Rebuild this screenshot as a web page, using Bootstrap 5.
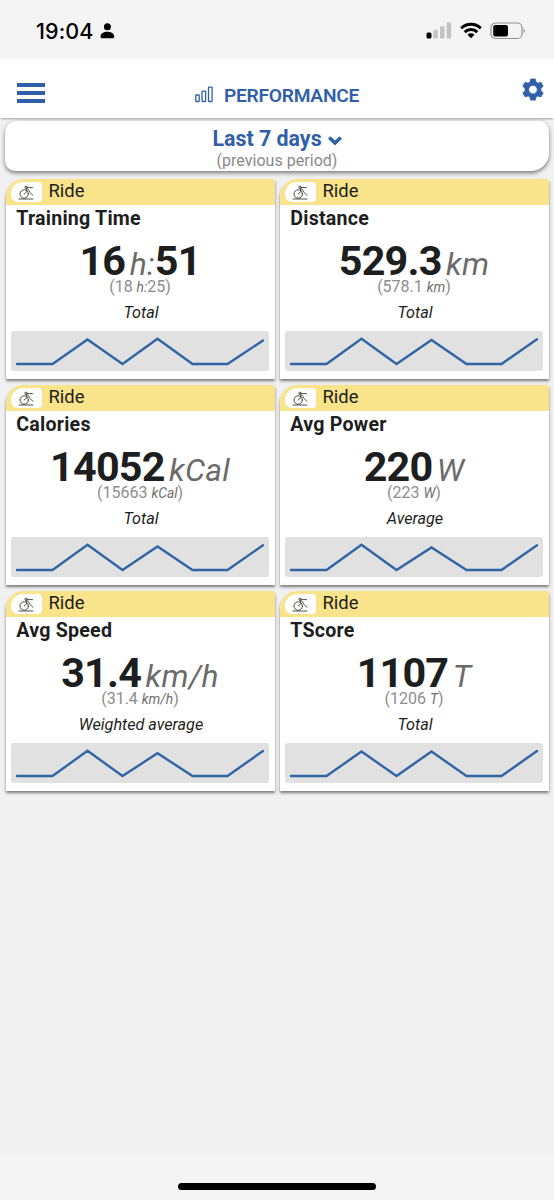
<!DOCTYPE html>
<html lang="en">
<head>
<meta charset="utf-8">
<meta name="viewport" content="width=device-width, initial-scale=1">
<title>Performance</title>
<link href="https://cdn.jsdelivr.net/npm/bootstrap@5.3.0/dist/css/bootstrap.min.css" rel="stylesheet">
<style>
  body { font-family: Roboto, "Liberation Sans", sans-serif; background: #f1f1f1; color: #1d1e20; height: 1200px; overflow: hidden; }
  svg { display: block; flex: none; }
  .blue { color: #315fa9; }
  .status { height: 59px; background: #f4f4f4; padding: 2px 32px 0 36px; color: #000; }
  .clock { font: 500 21.5px/30px Inter, sans-serif; letter-spacing: .1px; }
  .signal { margin-right: 8.5px; }
  .battery { margin: 0 -4px 0 8px; }
  .topbar { height: 59px; background: #fff; box-shadow: 0 2px 2px -1px rgba(0,0,0,.35); padding: 0 9px 0 17px; }
  .topbar h1 { font-size: 19.2px; font-weight: 600; line-height: 24px; letter-spacing: -.25px; }
  .topbar .menu { margin-top: 9px; }
  .topbar .heading { padding: 15px 12px 0 0; }
  .topbar .bars { margin: -4px 11px 0 0; }
  .topbar .gear { margin-top: 2px; }
  .period { height: 50px; margin: 3px 5px 0; border-radius: 12px 10px 18px 10px; background: #fff; box-shadow: 0 2px 4px rgba(0,0,0,.5); padding-top: 6px; }
  .period-name { font-size: 21.4px; font-weight: 700; line-height: 24px; }
  .period-name svg { margin: 2px 0 0 6px; }
  .previous { font-size: 16px; line-height: 19px; color: #8a8a8a; letter-spacing: .03px; }
  .tiles { display: grid; grid-template-columns: 269px 269px; column-gap: 5px; row-gap: 6px; margin: 8px 0 0 5.5px; }
  .tile { height: 200px; background: #fff; border-radius: 18px 3px 0 0; box-shadow: 0 2px 3px rgba(0,0,0,.5); }
  .sport { height: 26px; background: #f9e38b; border-radius: 18px 3px 0 0; padding-left: 5px; font-size: 18.4px; line-height: 23px; }
  .sport-name { margin: -3px 0 0 7px; }
  .chip { width: 31px; height: 20px; background: #fff; border-radius: 12px 4px 4px 7px; }
  .tile h2 { font-size: 19.6px; font-weight: 700; line-height: 26px; padding: 1px 0 0 10.8px; margin: 0; letter-spacing: .23px; }
  .figure-row { font-size: 41.3px; font-weight: 700; line-height: 42px; height: 42px; margin-top: 8px; white-space: nowrap; letter-spacing: -.8px; }
  .figure-row i { font-size: 31.8px; font-weight: 400; color: #6b6b6b; margin: 0 0 0 4.5px; letter-spacing: .2px; }
  .before { font-size: 16px; line-height: 18px; margin-top: -4px; color: #8d8d8d; }
  .before i { font-size: 13.8px; color: #6f6f6f; }
  .method { font-size: 16.2px; line-height: 20px; margin: 7px 0 0 2px; font-style: italic; }
  .spark { width: 258px; height: 40px; margin: 8px 0 0 5.5px; background: #e1e1e1; border-radius: 3px; }
  .spark polyline { fill: none; stroke: #3165a6; stroke-width: 2.4; stroke-linecap: round; stroke-linejoin: miter; }
  .homebar { height: 46px; background: #f4f4f4; padding-bottom: 10.5px; }
  .homebar span { width: 198px; height: 7px; border-radius: 4px; background: #000; }
</style>
</head>
<body class="d-flex flex-column">
<svg width="0" height="0" class="position-absolute">
  <symbol id="rider" viewBox="0 0 16 15">
    <g fill="none" stroke="#3a3a35" stroke-width=".9" stroke-linecap="round" stroke-linejoin="round">
      <circle cx="6.200" cy="9" r="4.200"/>
      <circle cx="8" cy="2.300" r="1.200"/>
      <path d="M1 14H15M9.600 2.600H14.500M9 3.500C10.500 4 11 5.500 11.500 7L15 10.300M8.300 3.900L9 6.500 6.200 9"/>
    </g>
  </symbol>
</svg>

<div class="status d-flex align-items-center flex-shrink-0">
  <span class="clock">19:04</span>
  <svg style="margin-left:7px" width="15" height="16" viewBox="0 0 15 16" fill="#000"><circle cx="7.400" cy="3.800" r="3.500"/><path d="M.5 13.400C.7 10.500 3.500 8.700 7.400 8.700s6.700 1.800 6.900 4.700c.1 1.200-.6 1.800-1.700 1.800H2.200C1.100 15.200 .4 14.600 .5 13.400Z"/></svg>
  <svg class="signal ms-auto" width="26" height="17" viewBox="0 0 26 17"><rect x=".5" y="10.500" width="5" height="6" rx="1.500"/><g fill="#c3c3c3"><rect x="7.300" y="7.700" width="4.500" height="8.800" rx="1.300"/><rect x="14" y="4.200" width="4.500" height="12.300" rx="1.300"/><rect x="20.700" y=".5" width="4.500" height="16" rx="1.300"/></g></svg>
  <svg width="22" height="17" viewBox="0 0 22 17"><g fill="none" stroke="#000" stroke-width="2.900"><path d="M1.200 6.200a14 14 0 0 1 19.600 0"/><path d="M4.700 10.100a9 9 0 0 1 12.600 0"/></g><path d="M7.500 12.700a5 5 0 0 1 7 0L11 16.200Z"/></svg>
  <svg class="battery" width="36" height="18" viewBox="0 0 36 18"><rect x="1" y="1" width="31" height="15.500" rx="4.500" fill="none" stroke="#909090" stroke-width="1.200"/><rect x="3.200" y="3" width="14.800" height="11.500" rx="2"/><path d="M33.700 6.500c1.500.7 1.500 3.900 0 4.600Z" fill="#777"/></svg>
</div>

<header class="topbar blue d-flex align-items-center justify-content-between flex-shrink-0 position-relative">
  <svg class="menu" width="28" height="20" viewBox="0 0 28 20" fill="#315fa9"><path d="M0 0h28v4H0zM0 8h28v4H0zM0 16h28v4H0z"/></svg>
  <div class="heading d-flex align-items-center">
    <svg class="bars" width="18" height="17" viewBox="0 0 18 17" fill="none" stroke="#315fa9" stroke-width="1.300"><rect x=".8" y="9" width="3.400" height="6.500" rx=".5"/><rect x="7" y="5.200" width="3.600" height="10.300" rx=".5"/><rect x="13.500" y="1.200" width="3.600" height="14.300" rx=".5"/></svg>
    <h1 class="m-0">PERFORMANCE</h1>
  </div>
  <svg class="gear" width="24" height="24" viewBox="0 0 24 24" fill="#315fa9"><path fill-rule="evenodd" d="M9.700 1h4.600l.7 3.100 1.900 1.100 3-1 2.300 4-2.300 2.200v2.300l2.300 2.200-2.300 4-3-1-1.900 1.100-.7 3.100H9.700L9 19l-1.900-1.100-3 1-2.300-4 2.300-2.200v-2.300L1.800 8.200l2.300-4 3 1L9 4.100ZM12 7.300a4.300 4.300 0 1 0 0 8.600 4.300 4.300 0 0 0 0-8.600Z" stroke="#315fa9" stroke-width=".8" stroke-linejoin="round"/></svg>
</header>

<section class="period text-center flex-shrink-0">
  <div class="period-name blue d-flex justify-content-center align-items-center">Last 7 days
    <svg width="14" height="9" viewBox="0 0 14 9" fill="none" stroke="#315fa9" stroke-width="3.600"><path d="M1.200 1.500L7 7 12.800 1.500"/></svg>
  </div>
  <div class="previous">(previous period)</div>
</section>

<main class="tiles">
  <article class="tile">
    <div class="sport d-flex align-items-center"><span class="chip d-flex justify-content-center align-items-center"><svg width="16" height="15"><use href="#rider"/></svg></span><span class="sport-name">Ride</span></div>
    <h2>Training Time</h2>
    <div class="figure-row text-center">16<i>h:</i>51</div>
    <div class="before text-center">(18 <i>h:</i>25)</div>
    <div class="method text-center">Total</div>
    <svg class="spark" viewBox="0 0 258 40"><polyline points="6,33 41.500,33 76.500,8.500 111.500,33 146.500,7.800 181.500,33 216.500,33 252,9.500"/></svg>
  </article>
  <article class="tile">
    <div class="sport d-flex align-items-center"><span class="chip d-flex justify-content-center align-items-center"><svg width="16" height="15"><use href="#rider"/></svg></span><span class="sport-name">Ride</span></div>
    <h2>Distance</h2>
    <div class="figure-row text-center">529.3<i>km</i></div>
    <div class="before text-center">(578.1 <i>km</i>)</div>
    <div class="method text-center">Total</div>
    <svg class="spark" viewBox="0 0 258 40"><polyline points="6,33 41.500,33 76.500,7.800 111.500,33 146.500,9 181.500,33 216.500,33 252,8.200"/></svg>
  </article>
  <article class="tile">
    <div class="sport d-flex align-items-center"><span class="chip d-flex justify-content-center align-items-center"><svg width="16" height="15"><use href="#rider"/></svg></span><span class="sport-name">Ride</span></div>
    <h2>Calories</h2>
    <div class="figure-row text-center">14052<i>kCal</i></div>
    <div class="before text-center">(15663 <i>kCal</i>)</div>
    <div class="method text-center">Total</div>
    <svg class="spark" viewBox="0 0 258 40"><polyline points="6,33 41.500,33 76.500,7.800 111.500,33 146.500,9.500 181.500,33 216.500,33 252,8.200"/></svg>
  </article>
  <article class="tile">
    <div class="sport d-flex align-items-center"><span class="chip d-flex justify-content-center align-items-center"><svg width="16" height="15"><use href="#rider"/></svg></span><span class="sport-name">Ride</span></div>
    <h2>Avg Power</h2>
    <div class="figure-row text-center">220<i>W</i></div>
    <div class="before text-center">(223 <i>W</i>)</div>
    <div class="method text-center">Average</div>
    <svg class="spark" viewBox="0 0 258 40"><polyline points="6,33 41.500,33 76.500,7.800 111.500,33 146.500,10.500 181.500,33 216.500,33 252,8.200"/></svg>
  </article>
  <article class="tile">
    <div class="sport d-flex align-items-center"><span class="chip d-flex justify-content-center align-items-center"><svg width="16" height="15"><use href="#rider"/></svg></span><span class="sport-name">Ride</span></div>
    <h2>Avg Speed</h2>
    <div class="figure-row text-center">31.4<i>km/h</i></div>
    <div class="before text-center">(31.4 <i>km/h</i>)</div>
    <div class="method text-center">Weighted average</div>
    <svg class="spark" viewBox="0 0 258 40"><polyline points="6,33 41.500,33 76.500,7.800 111.500,33 146.500,10.200 181.500,33 216.500,33 252,8"/></svg>
  </article>
  <article class="tile">
    <div class="sport d-flex align-items-center"><span class="chip d-flex justify-content-center align-items-center"><svg width="16" height="15"><use href="#rider"/></svg></span><span class="sport-name">Ride</span></div>
    <h2>TScore</h2>
    <div class="figure-row text-center">1107<i>T</i></div>
    <div class="before text-center">(1206 <i>T</i>)</div>
    <div class="method text-center">Total</div>
    <svg class="spark" viewBox="0 0 258 40"><polyline points="6,33 41.500,33 76.500,8.500 111.500,33 146.500,8.500 181.500,33 216.500,33 252,8"/></svg>
  </article>
</main>

<footer class="homebar mt-auto flex-shrink-0 d-flex justify-content-center align-items-end"><span></span></footer>
<script src="https://cdn.jsdelivr.net/npm/bootstrap@5.3.0/dist/js/bootstrap.bundle.min.js"></script>
</body>
</html>
